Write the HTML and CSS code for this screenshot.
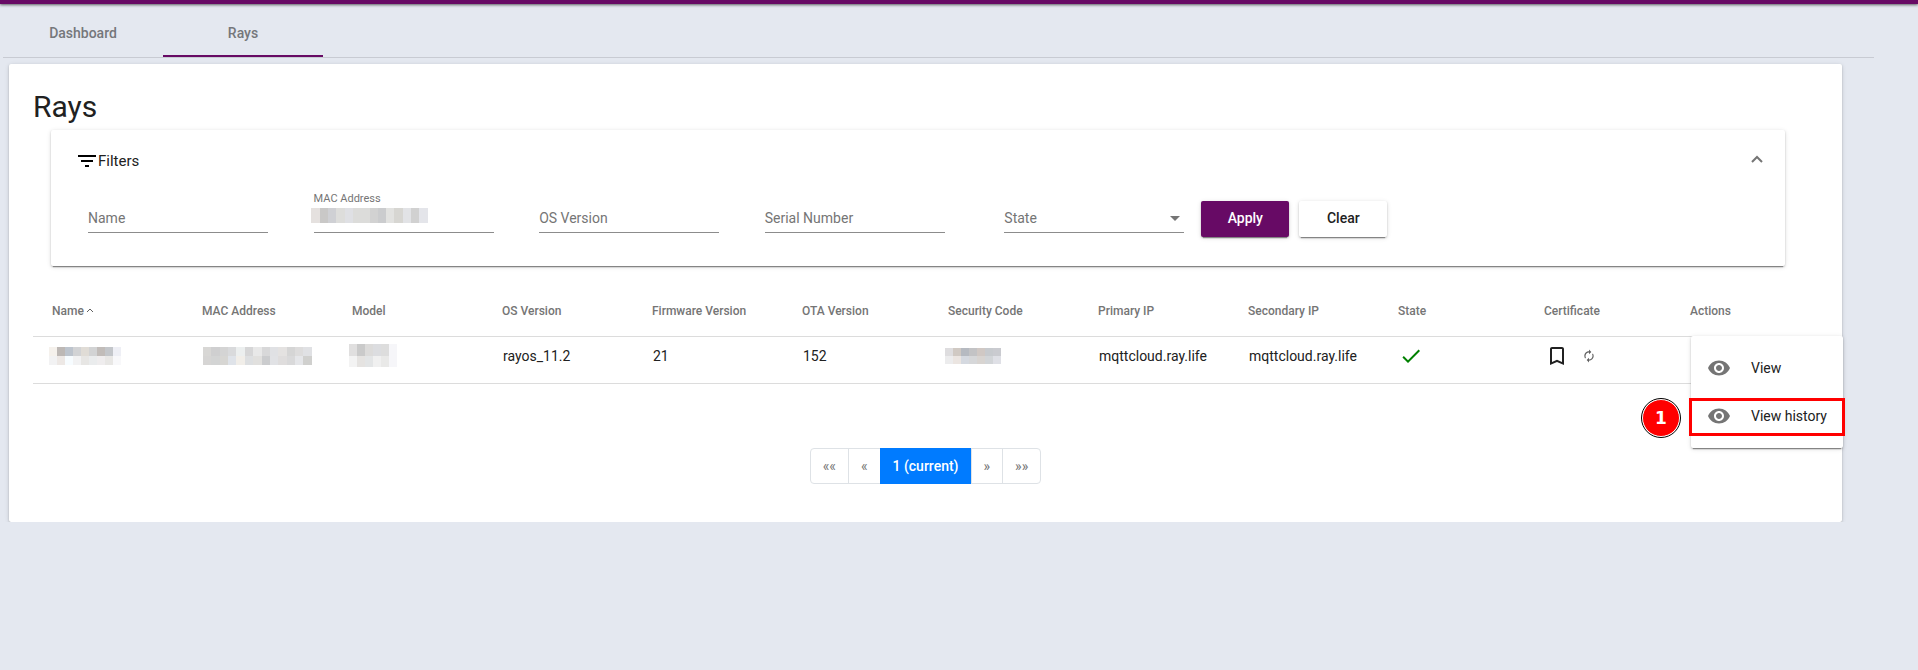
FILE: index.html
```html
<!DOCTYPE html>
<html lang="en">
<head>
    <meta charset="UTF-8">
    <meta name="viewport" content="width=device-width, initial-scale=1.0">
    <title>Rays</title>
    <link rel="stylesheet" href="styles.css">
</head>
<body>
    <header class="topbar"></header>

    <nav class="tabs">
        <a href="#dashboard" class="tab">Dashboard</a>
        <a href="#rays" class="tab active">Rays</a>
    </nav>

    <main class="card">
        <h1>Rays</h1>

        <form class="filters">
            <div class="filters-header">
                <svg class="icon-filter" viewBox="0 0 24 24"><path d="M10 18h4v-2h-4v2zM3 6v2h18V6H3zm3 7h12v-2H6v2z"/></svg>
                <span>Filters</span>
                <button type="button" class="toggle" aria-label="Collapse filters">
                    <svg viewBox="0 0 12 8"><path d="M1 7l5-5 5 5"/></svg>
                </button>
            </div>
            <div class="filters-body">
                <div class="field">
                    <label for="name">Name</label>
                    <input type="text" id="name" placeholder=" ">
                </div>
                <div class="field filled">
                    <label for="mac">MAC Address</label>
                    <input type="text" id="mac" placeholder=" ">
                    <svg class="mask mask-field" width="117" height="15" viewBox="0 0 117 15">
                        <path fill="#e5e1df" d="M0 0h9v15H0z"/>
                        <path fill="#c9c8c7" d="M9 0h8v15H9z"/>
                        <path fill="#cfd0d4" d="M17 0h8v15h-8z"/>
                        <path fill="#dddddb" d="M25 0h9v15h-9z"/>
                        <path fill="#dfe0e4" d="M34 0h8v15h-8z"/>
                        <path fill="#dcdcda" d="M42 0h17v15H42z"/>
                        <path fill="#d2d2d2" d="M59 0h8v15h-8z"/>
                        <path fill="#cbccce" d="M67 0h8v15h-8z"/>
                        <path fill="#e2e2e0" d="M75 0h8v15h-8z"/>
                        <path fill="#d7d6d2" d="M83 0h9v15h-9z"/>
                        <path fill="#e2e3e6" d="M92 0h8v15h-8z"/>
                        <path fill="#d1d1d1" d="M100 0h8v15h-8z"/>
                        <path fill="#e4e5ea" d="M108 0h9v15h-9z"/>
                    </svg>
                </div>
                <div class="field">
                    <label for="os">OS Version</label>
                    <input type="text" id="os" placeholder=" ">
                </div>
                <div class="field">
                    <label for="serial">Serial Number</label>
                    <input type="text" id="serial" placeholder=" ">
                </div>
                <div class="field-actions">
                    <div class="field">
                        <label for="state">State</label>
                        <select id="state">
                            <option value=""></option>
                        </select>
                        <svg class="arrow" viewBox="0 0 10 5"><path d="M0 0h10L5 5z"/></svg>
                    </div>
                    <div class="buttons">
                        <button type="submit" class="btn btn-primary">Apply</button>
                        <button type="reset" class="btn">Clear</button>
                    </div>
                </div>
            </div>
        </form>

        <table class="rays">
            <colgroup>
                <col span="5" class="col-text">
                <col class="col-short">
                <col span="3" class="col-text">
                <col span="2" class="col-short">
                <col>
            </colgroup>
            <thead>
                <tr>
                    <th>Name <svg class="sort" viewBox="0 0 6 4"><path d="M0 4l3-3 3 3"/></svg></th>
                    <th>MAC Address</th>
                    <th>Model</th>
                    <th>OS Version</th>
                    <th>Firmware Version</th>
                    <th>OTA Version</th>
                    <th>Security Code</th>
                    <th>Primary IP</th>
                    <th>Secondary IP</th>
                    <th>State</th>
                    <th>Certificate</th>
                    <th>Actions</th>
                </tr>
            </thead>
            <tbody>
                <tr>
                    <td class="masked">
                        <svg class="mask" width="72" height="18" viewBox="0 0 72 18">
                            <path fill="#f5f1ec" d="M0 0h8v9H0z"/>
                            <path fill="#bdb8b5" d="M8 0h8v9H8z"/>
                            <path fill="#bdc4cd" d="M16 0h8v9h-8z"/>
                            <path fill="#d2d3d5" d="M24 0h8v9h-8z"/>
                            <path fill="#e0dcd6" d="M32 0h8v9h-8z"/>
                            <path fill="#d2d3d4" d="M40 0h8v9h-8z"/>
                            <path fill="#c1bcb9" d="M48 0h8v9h-8z"/>
                            <path fill="#c3c6ca" d="M56 0h8v9h-8z"/>
                            <path fill="#eeeff5" d="M64 0h8v9h-8z"/>
                            <path fill="#f2f2f3" d="M0 9h8v9H0z"/>
                            <path fill="#ede8e5" d="M8 9h8v9H8z"/>
                            <path fill="#f7fcff" d="M16 9h8v9h-8z"/>
                            <path fill="#f2f2f3" d="M24 9h8v9h-8z"/>
                            <path fill="#e7e6e4" d="M32 9h8v9h-8z"/>
                            <path fill="#eaeced" d="M40 9h8v9h-8z"/>
                            <path fill="#efedee" d="M48 9h8v9h-8z"/>
                            <path fill="#e8e7e5" d="M56 9h8v9h-8z"/>
                            <path fill="#f8f8fa" d="M64 9h8v9h-8z"/>
                        </svg>
                    </td>
                    <td>
                        <svg class="mask" width="109" height="18" viewBox="0 0 109 18">
                            <path fill="#d8d7d5" d="M0 0h8v9H0z"/>
                            <path fill="#cfcfd0" d="M8 0h9v9H8z"/>
                            <path fill="#d4d4d4" d="M17 0h8v9h-8z"/>
                            <path fill="#d9dadc" d="M25 0h8v9h-8z"/>
                            <path fill="#ecefef" d="M33 0h9v9h-9z"/>
                            <path fill="#d6d6d7" d="M42 0h8v9h-8z"/>
                            <path fill="#e8e8e8" d="M50 0h9v9h-9z"/>
                            <path fill="#d8d8d9" d="M59 0h8v9h-8z"/>
                            <path fill="#e0e1e4" d="M67 0h8v9h-8z"/>
                            <path fill="#e4e2e1" d="M75 0h9v9h-9z"/>
                            <path fill="#d5d5d5" d="M84 0h8v9h-8z"/>
                            <path fill="#dddcdc" d="M92 0h8v9h-8z"/>
                            <path fill="#e0e1e4" d="M100 0h9v9h-9z"/>
                            <path fill="#d6d5d4" d="M0 9h8v9H0z"/>
                            <path fill="#d3d4d4" d="M8 9h9v9H8z"/>
                            <path fill="#d7d6d3" d="M17 9h8v9h-8z"/>
                            <path fill="#dfe3e9" d="M25 9h8v9h-8z"/>
                            <path fill="#f1eee9" d="M33 9h9v9h-9z"/>
                            <path fill="#dddfe1" d="M42 9h8v9h-8z"/>
                            <path fill="#e1e0de" d="M50 9h9v9h-9z"/>
                            <path fill="#cbccce" d="M59 9h8v9h-8z"/>
                            <path fill="#e1e2e5" d="M67 9h8v9h-8z"/>
                            <path fill="#dfdddd" d="M75 9h9v9h-9z"/>
                            <path fill="#d9d9da" d="M84 9h8v9h-8z"/>
                            <path fill="#e5e6e9" d="M92 9h8v9h-8z"/>
                            <path fill="#d0d0ce" d="M100 9h9v9h-9z"/>
                        </svg>
                    </td>
                    <td class="masked">
                        <svg class="mask" width="48" height="23" viewBox="0 0 48 23">
                            <path fill="#e0dfdf" d="M0 0h8v12H0z"/>
                            <path fill="#cacaca" d="M8 0h8v12H8z"/>
                            <path fill="#dcdbda" d="M16 0h8v12h-8z"/>
                            <path fill="#dcdde0" d="M24 0h8v12h-8z"/>
                            <path fill="#dddddd" d="M32 0h8v12h-8z"/>
                            <path fill="#f6f6f9" d="M40 0h8v23h-8z"/>
                            <path fill="#f3f3f3" d="M0 12h8v11H0z"/>
                            <path fill="#e5e3e1" d="M8 12h8v11H8z"/>
                            <path fill="#e3e5e6" d="M16 12h8v11h-8z"/>
                            <path fill="#f0f0f0" d="M24 12h8v11h-8z"/>
                            <path fill="#e9e9e8" d="M32 12h8v11h-8z"/>
                        </svg>
                    </td>
                    <td>rayos_11.2</td>
                    <td>21</td>
                    <td>152</td>
                    <td class="masked">
                        <svg class="mask" width="56" height="16" viewBox="0 0 56 16">
                            <path fill="#dedddf" d="M0 0h8v8H0z"/>
                            <path fill="#d0c9c3" d="M8 0h8v8H8z"/>
                            <path fill="#b6bac1" d="M16 0h8v8h-8z"/>
                            <path fill="#c3c3c5" d="M24 0h8v8h-8z"/>
                            <path fill="#d0c8c4" d="M32 0h8v8h-8z"/>
                            <path fill="#c7cace" d="M40 0h8v8h-8z"/>
                            <path fill="#cacbd0" d="M48 0h8v8h-8z"/>
                            <path fill="#ececed" d="M0 8h8v8H0z"/>
                            <path fill="#ebe5e1" d="M8 8h8v8H8z"/>
                            <path fill="#d5d9e0" d="M16 8h8v8h-8z"/>
                            <path fill="#d6d7d9" d="M24 8h8v8h-8z"/>
                            <path fill="#d8d4d1" d="M32 8h8v8h-8z"/>
                            <path fill="#d2d5d8" d="M40 8h8v8h-8z"/>
                            <path fill="#dfe0e6" d="M48 8h8v8h-8z"/>
                        </svg>
                    </td>
                    <td>mqttcloud.ray.life</td>
                    <td>mqttcloud.ray.life</td>
                    <td><svg class="icon check" viewBox="0 0 24 24"><path d="M9 16.17L4.83 12l-1.42 1.41L9 19 21 7l-1.41-1.41z"/></svg></td>
                    <td>
                        <div class="certificate">
                            <svg class="icon" viewBox="0 0 24 24"><path d="M17 3H7c-1.1 0-1.99.9-1.99 2L5 21l7-3 7 3V5c0-1.1-.9-2-2-2zm0 15l-5-2.18L7 18V5h10v13z"/></svg>
                            <button type="button" class="renew" aria-label="Renew certificate">
                                <svg viewBox="0 0 24 24"><path d="M12 6v3l4-4-4-4v3c-4.42 0-8 3.58-8 8 0 1.57.46 3.03 1.24 4.26L6.7 14.8C6.25 13.97 6 13.01 6 12c0-3.31 2.69-6 6-6zm6.76 1.74L17.3 9.2c.44.84.7 1.79.7 2.8 0 3.31-2.69 6-6 6v-3l-4 4 4 4v-3c4.42 0 8-3.58 8-8 0-1.57-.46-3.03-1.24-4.26z"/></svg>
                            </button>
                        </div>
                    </td>
                    <td class="actions">
                        <div class="menu">
                            <button type="button" class="menu-item">
                                <svg class="icon" viewBox="0 0 24 24"><path d="M12 4.5C7 4.5 2.73 7.61 1 12c1.73 4.39 6 7.5 11 7.5s9.27-3.11 11-7.5c-1.73-4.39-6-7.5-11-7.5zM12 17c-2.76 0-5-2.24-5-5s2.24-5 5-5 5 2.24 5 5-2.24 5-5 5zm0-8c-1.66 0-3 1.34-3 3s1.34 3 3 3 3-1.34 3-3-1.34-3-3-3z"/></svg>
                                View
                            </button>
                            <button type="button" class="menu-item">
                                <svg class="icon" viewBox="0 0 24 24"><path d="M12 4.5C7 4.5 2.73 7.61 1 12c1.73 4.39 6 7.5 11 7.5s9.27-3.11 11-7.5c-1.73-4.39-6-7.5-11-7.5zM12 17c-2.76 0-5-2.24-5-5s2.24-5 5-5 5 2.24 5 5-2.24 5-5 5zm0-8c-1.66 0-3 1.34-3 3s1.34 3 3 3 3-1.34 3-3-1.34-3-3-3z"/></svg>
                                View history
                            </button>
                            <div class="highlight"></div>
                            <div class="step">1</div>
                        </div>
                    </td>
                </tr>
            </tbody>
        </table>

        <nav class="pagination" aria-label="Pages">
            <a href="#first" class="page">««</a>
            <a href="#prev" class="page">«</a>
            <a href="#1" class="page current">1 (current)</a>
            <a href="#next" class="page">»</a>
            <a href="#last" class="page">»»</a>
        </nav>
    </main>
</body>
</html>
```
FILE: styles.css
```css
* {
    box-sizing: border-box;
}

body {
    margin: 0;
    background-color: #e4e8f0;
    color: #212121;
    font-family: Roboto, Arial, sans-serif;
    font-size: 14px;
    line-height: 20px;
}

button,
input,
select {
    font: inherit;
    color: inherit;
}

.topbar {
    height: 4px;
    background-color: #670a65;
    box-shadow: 0 1px 3px rgba(0, 0, 0, 0.6);
}

.tabs {
    display: flex;
    margin: 6px 44px 6px 3px;
    border-bottom: 1px solid #c8cbd3;
}

.tab {
    width: 160px;
    padding: 13px 0 12px;
    border-bottom: 2px solid transparent;
    text-align: center;
    text-decoration: none;
    font-weight: 500;
    color: #75777b;
}

.tab.active {
    border-bottom-color: #670a65;
}

.card,
.filters,
.btn,
.menu {
    border-radius: 2px;
    background-color: #fff;
    box-shadow: 0 3px 1px -2px rgba(0, 0, 0, 0.35), 0 1px 2px rgba(0, 0, 0, 0.2), 0 1px 5px rgba(0, 0, 0, 0.12);
}

.card {
    margin: 0 76px 0 9px;
    padding: 24px 24px 38px;
}

h1 {
    margin: 0 0 4px;
    font-size: 30px;
    font-weight: 400;
    line-height: 38px;
}

.filters {
    margin: 0 33px 0 18px;
    padding: 16px 26px 33px;
}

.filters-header {
    display: flex;
    align-items: center;
    font-size: 15px;
    line-height: 30px;
}

.icon-filter {
    width: 24px;
    height: 24px;
    margin-right: -1px;
    margin-left: -2px;
}

.toggle {
    display: flex;
    margin-left: auto;
    margin-right: -4px;
    padding: 0 0 4px;
    border: none;
    background: none;
    cursor: pointer;
}

.toggle svg {
    width: 12px;
    height: 8px;
    fill: none;
    stroke: #757575;
    stroke-width: 2;
}

.filters-body {
    display: grid;
    grid-template-columns: repeat(4, 13.5%) 1fr;
    padding: 8px 0 0 11px;
}

.field {
    position: relative;
    width: 180px;
    padding-top: 16px;
}

.field label {
    position: absolute;
    top: 24px;
    left: 0;
    color: #757575;
    pointer-events: none;
}

.field.filled label {
    top: 5px;
    font-size: 11px;
}

.field input,
.field select {
    display: block;
    width: 100%;
    height: 33px;
    padding: 0;
    border: none;
    border-bottom: 1px solid #8c8c8c;
    border-radius: 0;
    outline: none;
    background: none;
    appearance: none;
}

.mask {
    display: block;
}

.mask-field {
    position: absolute;
    top: 24px;
    left: -3px;
}

.arrow {
    position: absolute;
    top: 32px;
    right: 4px;
    width: 10px;
    height: 5px;
    fill: #757575;
}

.field-actions {
    display: flex;
    gap: 17px;
    padding-left: 14px;
}

.buttons {
    display: flex;
    align-items: flex-end;
    gap: 10px;
    padding-top: 17px;
    margin-bottom: -4px;
}

.btn {
    width: 88px;
    height: 36px;
    padding: 0 0 2px;
    border: none;
    font-weight: 500;
    cursor: pointer;
}

.btn-primary {
    background-color: #670a65;
    color: #fff;
}

.rays {
    width: 100%;
    margin-top: 20px;
    border-collapse: collapse;
    table-layout: fixed;
}

.col-text {
    width: 150px;
}

.col-short {
    width: 146px;
}

.rays th {
    height: 50px;
    padding: 0 0 0 19px;
    border-bottom: 1px solid #dcdcdc;
    text-align: left;
    font-size: 12px;
    font-weight: 500;
    color: #757575;
}

.rays td {
    height: 47px;
    padding: 0 0 8px 20px;
    border-bottom: 1px solid #dcdcdc;
}

.rays .masked {
    padding-left: 16px;
}

.sort {
    width: 6px;
    height: 4px;
    margin-bottom: 3px;
    fill: none;
    stroke: #616161;
}

.icon {
    display: block;
    width: 24px;
    height: 24px;
    fill: #212121;
}

.check {
    fill: #008000;
}

.certificate {
    display: flex;
    align-items: center;
    gap: 13px;
}

.renew {
    padding: 0;
    border: none;
    background: none;
    cursor: pointer;
}

.renew svg {
    display: block;
    width: 14px;
    height: 14px;
    fill: #616161;
}

.rays .actions {
    position: relative;
}

.menu {
    position: absolute;
    top: -1px;
    left: 20px;
    width: 152px;
    padding: 8px 0;
}

.menu-item {
    display: flex;
    align-items: center;
    gap: 20px;
    width: 100%;
    height: 48px;
    padding: 0 16px;
    border: none;
    background: none;
    white-space: nowrap;
    cursor: pointer;
}

.menu-item .icon {
    fill: #757575;
}

.highlight {
    position: absolute;
    top: 62px;
    left: -2px;
    right: -2px;
    height: 38px;
    border: 3px solid #ff0000;
    pointer-events: none;
}

.step {
    position: absolute;
    top: 63px;
    left: -49px;
    width: 38px;
    height: 38px;
    border: 1px solid #fff;
    border-radius: 50%;
    outline: 1px solid #000;
    background-color: #ff0000;
    color: #fff;
    font-family: "DejaVu Sans", sans-serif;
    font-size: 17px;
    font-weight: 700;
    line-height: 36px;
    text-align: center;
}

.pagination {
    display: flex;
    justify-content: center;
    margin-top: 64px;
}

.page {
    height: 36px;
    margin-left: -1px;
    padding: 0 12px;
    border: 1px solid #dee2e6;
    color: #757575;
    line-height: 34px;
    text-decoration: none;
}

.page:first-child {
    margin-left: 0;
    border-radius: 4px 0 0 4px;
}

.page:last-child {
    border-radius: 0 4px 4px 0;
}

.page.current {
    border-color: #007bff;
    background-color: #007bff;
    color: #fff;
    font-weight: 500;
}
```
